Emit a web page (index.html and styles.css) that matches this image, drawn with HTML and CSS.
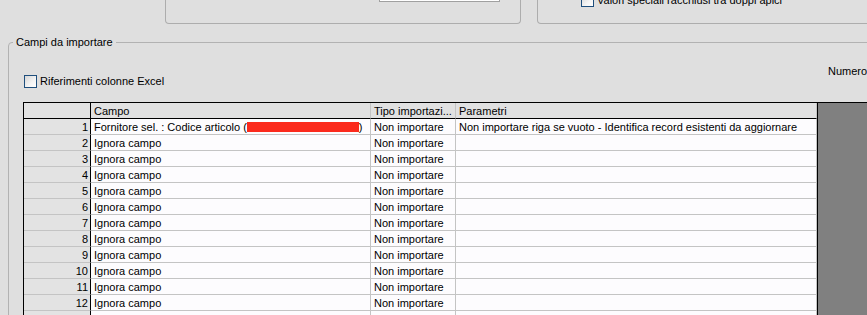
FILE: index.html
```html
<!DOCTYPE html>
<html lang="it">
  <head>
    <meta charset="UTF-8" />
    <title>Importazione articoli</title>
    <link rel="stylesheet" href="styles.css">
  </head>

  <body>
    <div class="top">
      <div class="group group-a">
        <div class="edit"></div>
      </div>
      <div class="group group-b">
        <label class="check-label">
          <span class="check"></span>
          Valori speciali racchiusi tra doppi apici
        </label>
      </div>
    </div>

    <fieldset class="fields">
      <legend>Campi da importare</legend>

      <div class="options">
        <label class="check-label excel">
          <span class="check"></span>
          Riferimenti colonne Excel
        </label>
        <div class="numero">Numero</div>
      </div>

      <div class="grid">
        <div class="cols">
          <div class="cell num head"></div>
          <div class="cell head">Campo</div>
          <div class="cell head">Tipo importazi...</div>
          <div class="cell head">Parametri</div>

          <div class="cell num">1</div>
          <div class="cell">Fornitore sel. : Codice articolo (<span class="redacted"></span>)</div>
          <div class="cell">Non importare</div>
          <div class="cell">Non importare riga se vuoto - Identifica record esistenti da aggiornare</div>

          <div class="cell num">2</div><div class="cell">Ignora campo</div><div class="cell">Non importare</div><div class="cell"></div>
          <div class="cell num">3</div><div class="cell">Ignora campo</div><div class="cell">Non importare</div><div class="cell"></div>
          <div class="cell num">4</div><div class="cell">Ignora campo</div><div class="cell">Non importare</div><div class="cell"></div>
          <div class="cell num">5</div><div class="cell">Ignora campo</div><div class="cell">Non importare</div><div class="cell"></div>
          <div class="cell num">6</div><div class="cell">Ignora campo</div><div class="cell">Non importare</div><div class="cell"></div>
          <div class="cell num">7</div><div class="cell">Ignora campo</div><div class="cell">Non importare</div><div class="cell"></div>
          <div class="cell num">8</div><div class="cell">Ignora campo</div><div class="cell">Non importare</div><div class="cell"></div>
          <div class="cell num">9</div><div class="cell">Ignora campo</div><div class="cell">Non importare</div><div class="cell"></div>
          <div class="cell num">10</div><div class="cell">Ignora campo</div><div class="cell">Non importare</div><div class="cell"></div>
          <div class="cell num">11</div><div class="cell">Ignora campo</div><div class="cell">Non importare</div><div class="cell"></div>
          <div class="cell num">12</div><div class="cell">Ignora campo</div><div class="cell">Non importare</div><div class="cell"></div>
          <div class="cell num"></div><div class="cell"></div><div class="cell"></div><div class="cell"></div>
        </div>
        <div class="grid-fill"></div>
      </div>
    </fieldset>
  </body>
</html>
```

FILE: styles.css
```css
body {
  margin: 0;
  width: 867px;
  height: 315px;
  overflow: hidden;
  background-color: #dfdfdf;
  color: #000;
  font-family: 'Liberation Sans', Arial, sans-serif;
  font-size: 11px;
  line-height: 13px;
}

.top {
  display: flex;
  align-items: flex-end;
  height: 24px;
  overflow: hidden;
}

.group {
  flex-shrink: 0;
  height: 60px;
  box-sizing: border-box;
  border: 1px solid #adadad;
  border-top: none;
  border-radius: 0 0 4px 4px;
  display: flex;
  align-items: flex-end;
}

.group-a {
  margin-left: 165px;
  width: 356px;
  padding: 0 0 21px 213px;
}

.edit {
  width: 121px;
  height: 20px;
  box-sizing: border-box;
  border: 1px solid #a0a0a0;
  background-color: #fff;
}

.group-b {
  margin-left: 16px;
  width: 400px;
  padding: 0 0 16px 43px;
}

.check-label {
  display: flex;
  align-items: center;
  gap: 3px;
  white-space: nowrap;
}

.check {
  width: 13px;
  height: 13px;
  box-sizing: border-box;
  border: 1px solid #1f4f7d;
  background: linear-gradient(135deg, #d6d6d6 0%, #f4f4f4 60%, #fff 100%);
}

.fields {
  margin: 12px 0 0 8px;
  padding: 0;
  width: 900px;
  height: 400px;
  box-sizing: border-box;
  border: 1px solid #b2b2b2;
  border-radius: 4px 0 0 0;
}

.fields legend {
  margin-left: 4px;
  padding: 0 3px;
  line-height: 13px;
}

.options {
  display: flex;
  align-items: flex-start;
  padding: 16px 0 0 15px;
}

.excel {
  margin-top: 10px;
}

.numero {
  margin-left: auto;
  width: 79px;
  white-space: nowrap;
}

.grid {
  display: flex;
  margin: 14px 0 0 14px;
  border-top: 1px solid #000;
  border-left: 1px solid #000;
  height: 260px;
}

.cols {
  display: grid;
  grid-template-columns: 67px 280px 85px 361px;
  grid-auto-rows: 16px;
  align-content: start;
  background-color: #fdfcfe;
}

.cell {
  box-sizing: border-box;
  border-right: 1px solid #c4c4c4;
  border-bottom: 1px solid #c4c4c4;
  padding: 1px 3px 0;
  line-height: 15px;
  white-space: nowrap;
  overflow: hidden;
}

.cell.head {
  background-color: #e1e1e1;
  border-bottom-color: #000;
}

.cell.num {
  background-color: #e3e3e3;
  border-right-color: #000;
  text-align: right;
  padding-right: 2px;
}

.redacted {
  display: inline-block;
  width: 112px;
  height: 10px;
  vertical-align: -1px;
  background-color: #fb2a1c;
}

.grid-fill {
  flex: 1;
  background-color: #808080;
  border-left: 1px solid #000;
}
```
